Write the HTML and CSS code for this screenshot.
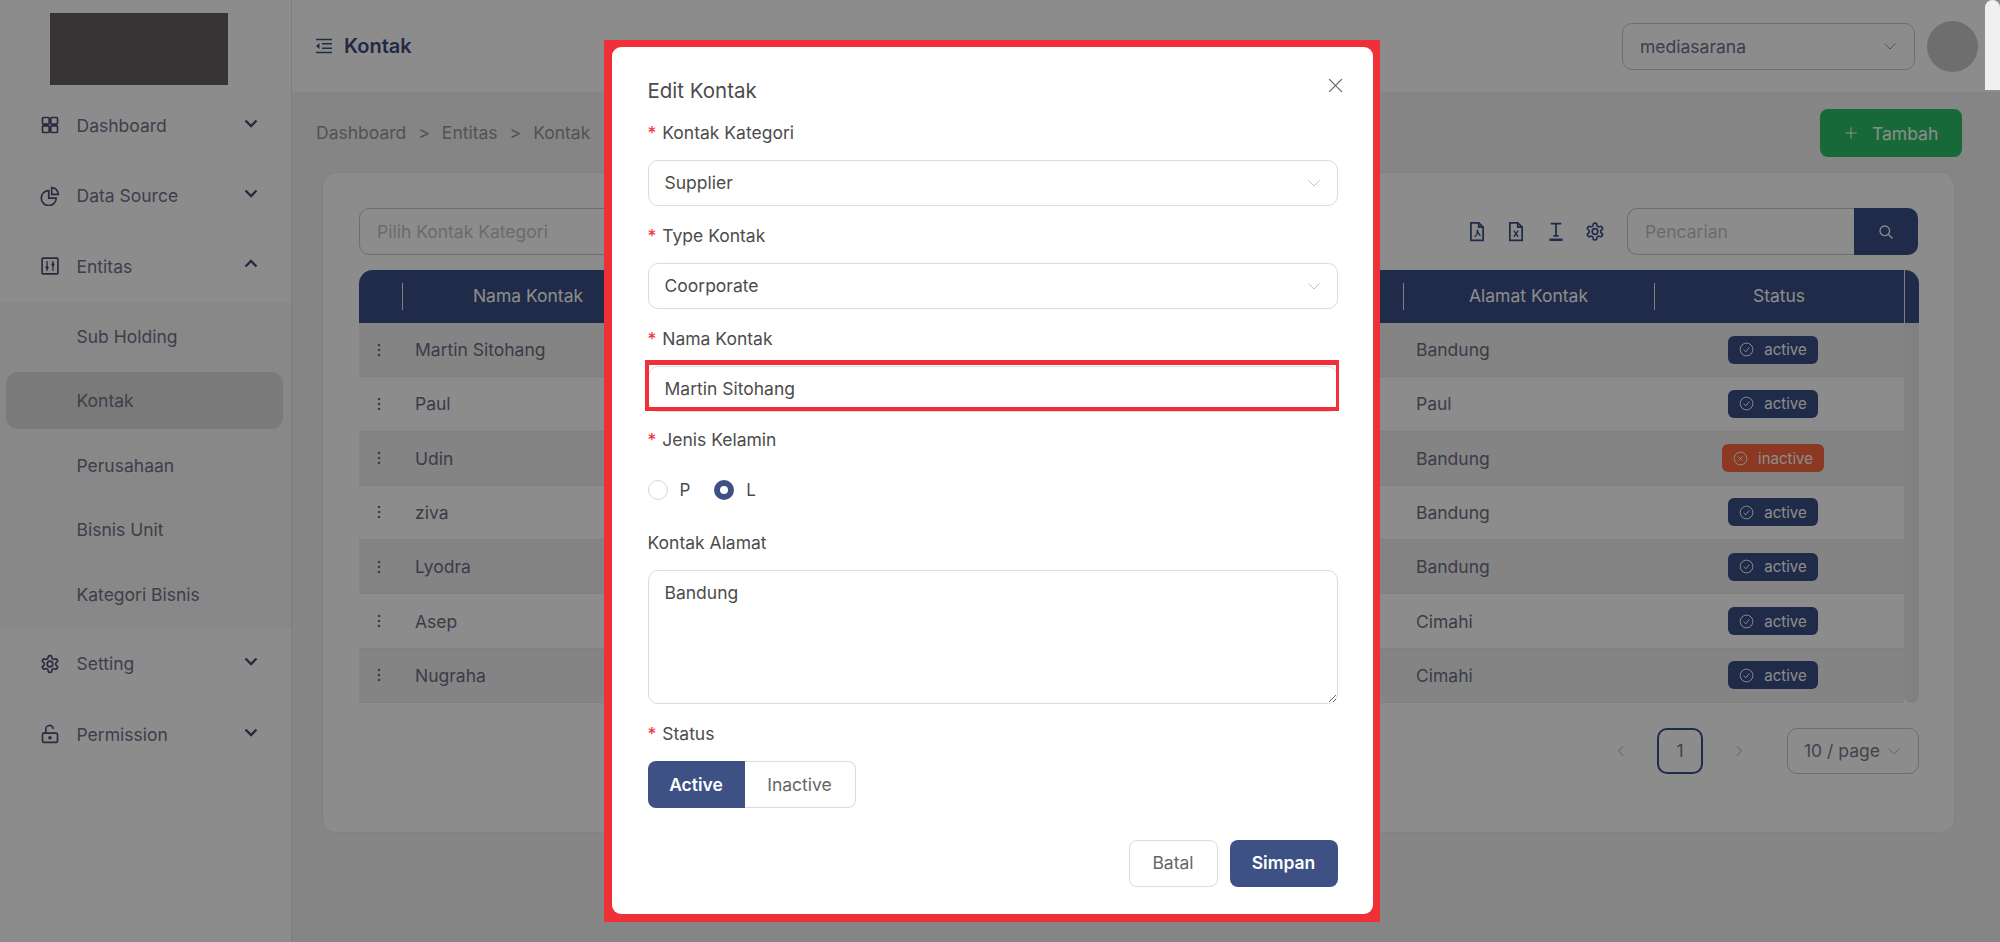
FILE: index.html
```html
<!doctype html>
<html>
<head>
<meta charset="utf-8">
<title>Kontak</title>
<link rel="stylesheet" href="styles.css">
</head>
<body>
<svg class="defs" width="0" height="0">
  <symbol id="i-gear" viewBox="0 0 24 24"><path d="M12.22 2h-.44a2 2 0 0 0-2 2v.18a2 2 0 0 1-1 1.73l-.43.25a2 2 0 0 1-2 0l-.15-.08a2 2 0 0 0-2.73.73l-.22.38a2 2 0 0 0 .73 2.73l.15.1a2 2 0 0 1 1 1.72v.51a2 2 0 0 1-1 1.74l-.15.09a2 2 0 0 0-.73 2.73l.22.38a2 2 0 0 0 2.73.73l.15-.08a2 2 0 0 1 2 0l.43.25a2 2 0 0 1 1 1.73V20a2 2 0 0 0 2 2h.44a2 2 0 0 0 2-2v-.18a2 2 0 0 1 1-1.73l.43-.25a2 2 0 0 1 2 0l.15.08a2 2 0 0 0 2.73-.73l.22-.39a2 2 0 0 0-.73-2.73l-.15-.08a2 2 0 0 1-1-1.74v-.5a2 2 0 0 1 1-1.74l.15-.09a2 2 0 0 0 .73-2.73l-.22-.38a2 2 0 0 0-2.73-.73l-.15.08a2 2 0 0 1-2 0l-.43-.25a2 2 0 0 1-1-1.73V4a2 2 0 0 0-2-2z"/><circle cx="12" cy="12" r="3.4"/></symbol>
  <symbol id="i-down" viewBox="0 0 16 16"><path d="M2.5 5.5 8 11l5.500-5.500"/></symbol>
  <symbol id="i-kebab" viewBox="0 0 4 16"><circle cx="2" cy="3" r="1.300"/><circle cx="2" cy="8" r="1.300"/><circle cx="2" cy="13" r="1.300"/></symbol>
  <symbol id="i-check" viewBox="0 0 16 16"><circle cx="8" cy="8" r="6.800"/><path d="M5 8.200 7.200 10.500 11 5.800"/></symbol>
  <symbol id="i-cross" viewBox="0 0 16 16"><circle cx="8" cy="8" r="6.800"/><path d="M5.800 5.800l4.400 4.400M10.200 5.800l-4.400 4.400"/></symbol>
</svg>

<div class="app">
  <aside class="sidebar">
    <div class="logo"></div>
    <nav class="menu">
      <a class="menu-item">
        <svg class="menu-icon" viewBox="0 0 24 24"><rect x="3" y="3" width="8" height="8" rx="1"/><rect x="13" y="3" width="8" height="8" rx="1"/><rect x="3" y="13" width="8" height="8" rx="1"/><rect x="13" y="13" width="8" height="8" rx="1"/></svg>
        <span>Dashboard</span>
        <svg class="menu-arrow"><use href="#i-down"/></svg>
      </a>
      <a class="menu-item">
        <svg class="menu-icon" viewBox="0 0 24 24"><path d="M10.500 5.500a9 9 0 1 0 9 9h-9z"/><path d="M14 2a8 8 0 0 1 8 8h-8z"/></svg>
        <span>Data Source</span>
        <svg class="menu-arrow"><use href="#i-down"/></svg>
      </a>
      <a class="menu-item">
        <svg class="menu-icon" viewBox="0 0 24 24"><rect x="2.500" y="2.500" width="19" height="19" rx="1"/><path class="thin" d="M8.500 6v12M15.500 6v12"/><path class="fill" d="M8.500 11l2.200 2.800-2.200 2.800-2.200-2.800zM15.500 7.500l2.200 2.800-2.200 2.800-2.200-2.800z"/></svg>
        <span>Entitas</span>
        <svg class="menu-arrow is-open"><use href="#i-down"/></svg>
      </a>
      <div class="submenu">
        <a class="sub-item">Sub Holding</a>
        <a class="sub-item is-active">Kontak</a>
        <a class="sub-item">Perusahaan</a>
        <a class="sub-item">Bisnis Unit</a>
        <a class="sub-item">Kategori Bisnis</a>
      </div>
      <a class="menu-item">
        <svg class="menu-icon"><use href="#i-gear"/></svg>
        <span>Setting</span>
        <svg class="menu-arrow"><use href="#i-down"/></svg>
      </a>
      <a class="menu-item">
        <svg class="menu-icon" viewBox="0 0 24 24"><rect x="3" y="11" width="18" height="11" rx="1.500"/><path d="M7 11V6.500a4.500 4.500 0 0 1 9-.5"/><circle cx="12" cy="16.500" r="1.200"/></svg>
        <span>Permission</span>
        <svg class="menu-arrow"><use href="#i-down"/></svg>
      </a>
    </nav>
  </aside>

  <main class="main">
    <header class="topbar">
      <svg class="fold-icon" viewBox="0 0 18 16"><path d="M1 1.500h16M7 5.800h10M7 10.200h10M1 14.500h16"/><path class="fill" d="M4.500 5v6L1 8z"/></svg>
      <h1 class="page-title">Kontak</h1>
      <div class="select org-select"><span>mediasarana</span><svg class="select-arrow"><use href="#i-down"/></svg></div>
      <div class="avatar"></div>
    </header>

    <div class="content">
      <div class="crumb-row">
        <div class="crumbs"><span>Dashboard</span><i>&gt;</i><span>Entitas</span><i>&gt;</i><span>Kontak</span></div>
        <button class="btn-add"><svg viewBox="0 0 16 16"><path d="M8 1.500v13M1.500 8h13"/></svg>Tambah</button>
      </div>

      <section class="card">
        <div class="toolbar">
          <div class="select filter-select"><span class="placeholder">Pilih Kontak Kategori</span></div>
          <div class="tool-icons">
            <svg viewBox="0 0 20 24"><path d="M3 2h9l5 5v15H3z"/><path d="M12 2v5h5"/><path class="thin" d="M7 18c2-1 4-4 3-8 1 3 2 5 4 7"/></svg>
            <svg viewBox="0 0 20 24"><path d="M3 2h9l5 5v15H3z"/><path d="M12 2v5h5"/><path class="thin" d="M7.500 11l5 7M12.500 11l-5 7"/></svg>
            <svg viewBox="0 0 20 24"><path d="M4 3h12M10 3v14M7 17h6"/><path class="thick" d="M2.500 21.500h15"/></svg>
            <svg><use href="#i-gear"/></svg>
          </div>
          <div class="search">
            <div class="search-input">Pencarian</div>
            <button class="search-btn"><svg viewBox="0 0 16 16"><circle cx="6.800" cy="6.800" r="4.800"/><path d="m10.500 10.500 4 4"/></svg></button>
          </div>
        </div>

        <div class="tbl">
          <div class="tbl-head">
            <div></div>
            <div class="th">Nama Kontak</div>
            <div class="th"></div>
            <div class="th">Alamat Kontak</div>
            <div class="th">Status</div>
            <div class="th th-end"></div>
          </div>
          <div class="tbl-wrap">
            <div class="tbl-rows">
              <div class="row"><svg class="kebab"><use href="#i-kebab"/></svg><div class="td">Martin Sitohang</div><div></div><div class="td">Bandung</div><div class="td-status"><span class="badge"><svg><use href="#i-check"/></svg>active</span></div></div>
              <div class="row"><svg class="kebab"><use href="#i-kebab"/></svg><div class="td">Paul</div><div></div><div class="td">Paul</div><div class="td-status"><span class="badge"><svg><use href="#i-check"/></svg>active</span></div></div>
              <div class="row"><svg class="kebab"><use href="#i-kebab"/></svg><div class="td">Udin</div><div></div><div class="td">Bandung</div><div class="td-status"><span class="badge badge-off"><svg><use href="#i-cross"/></svg>inactive</span></div></div>
              <div class="row"><svg class="kebab"><use href="#i-kebab"/></svg><div class="td">ziva</div><div></div><div class="td">Bandung</div><div class="td-status"><span class="badge"><svg><use href="#i-check"/></svg>active</span></div></div>
              <div class="row"><svg class="kebab"><use href="#i-kebab"/></svg><div class="td">Lyodra</div><div></div><div class="td">Bandung</div><div class="td-status"><span class="badge"><svg><use href="#i-check"/></svg>active</span></div></div>
              <div class="row"><svg class="kebab"><use href="#i-kebab"/></svg><div class="td">Asep</div><div></div><div class="td">Cimahi</div><div class="td-status"><span class="badge"><svg><use href="#i-check"/></svg>active</span></div></div>
              <div class="row"><svg class="kebab"><use href="#i-kebab"/></svg><div class="td">Nugraha</div><div></div><div class="td">Cimahi</div><div class="td-status"><span class="badge"><svg><use href="#i-check"/></svg>active</span></div></div>
            </div>
            <div class="tbl-scroll"></div>
          </div>
        </div>

        <div class="pager">
          <svg class="pager-arrow" viewBox="0 0 16 16"><path d="M10.500 2.500 5 8l5.500 5.500"/></svg>
          <div class="pager-num">1</div>
          <svg class="pager-arrow" viewBox="0 0 16 16"><path d="M5.500 2.500 11 8l-5.500 5.500"/></svg>
          <div class="select size-select"><span>10 / page</span><svg class="select-arrow"><use href="#i-down"/></svg></div>
        </div>
      </section>
    </div>
  </main>
</div>

<div class="overlay">
  <div class="page-thumb"></div>
  <div class="marked">
    <form class="modal">
      <svg class="modal-close" viewBox="0 0 16 16"><path d="M2 2l12 12M14 2 2 14"/></svg>
      <div class="modal-title">Edit Kontak</div>

      <div class="field">
        <div class="label req">Kontak Kategori</div>
        <div class="ctl"><span>Supplier</span><svg class="select-arrow"><use href="#i-down"/></svg></div>
      </div>
      <div class="field">
        <div class="label req">Type Kontak</div>
        <div class="ctl"><span>Coorporate</span><svg class="select-arrow"><use href="#i-down"/></svg></div>
      </div>
      <div class="field field-marked">
        <div class="label req">Nama Kontak</div>
        <div class="ctl ctl-marked"><span>Martin Sitohang</span></div>
      </div>
      <div class="field">
        <div class="label req">Jenis Kelamin</div>
        <div class="radios">
          <label class="radio"><span class="dot"></span>P</label>
          <label class="radio"><span class="dot is-on"></span>L</label>
        </div>
      </div>
      <div class="field">
        <div class="label">Kontak Alamat</div>
        <textarea class="area">Bandung</textarea>
      </div>
      <div class="field">
        <div class="label req">Status</div>
        <div class="segment">
          <div class="seg seg-on">Active</div>
          <div class="seg">Inactive</div>
        </div>
      </div>

      <div class="modal-foot">
        <button type="button" class="btn">Batal</button>
        <button type="button" class="btn btn-primary">Simpan</button>
      </div>
    </form>
  </div>
</div>
</body>
</html>
```

FILE: styles.css
```css
* {
  box-sizing: border-box;
}
html, body {
  margin: 0;
  height: 100%;
  overflow: hidden;
}
body {
  font-family: Inter, "Noto Sans", sans-serif;
  font-size: 17.5px;
  color: #6d6d83;
  background: #fff;
}
svg {
  fill: none;
  stroke: currentColor;
  stroke-width: 2;
  display: block;
}
.defs {
  position: absolute;
}

.app {
  display: flex;
  height: 942px;
}

/* sidebar */
.sidebar {
  width: 292px;
  flex: none;
  background: #fff;
  border-right: 1px solid #e6e6e6;
  padding-top: 13px;
}
.logo {
  width: 178px;
  height: 72px;
  margin-left: 50px;
  background: #635f5f;
}
.menu {
  margin-top: 5px;
}
.menu-item {
  display: flex;
  align-items: center;
  height: 70.5px;
  padding-left: 40px;
  color: #72728a;
}
.menu-icon {
  width: 20px;
  height: 20px;
  margin-right: 16.500px;
  color: #4e4e74;
}
.menu-icon .thin {
  stroke-width: 1.500;
}
.menu-icon .fill {
  fill: currentColor;
  stroke: none;
}
.menu-arrow {
  width: 16px;
  height: 16px;
  margin-left: auto;
  margin-right: 32px;
  margin-top: -5px;
  color: #4e4e74;
  stroke-width: 2.4;
}
.menu-arrow.is-open {
  transform: rotate(180deg);
}
.submenu {
  background: #f7f7f7;
  padding-top: 6px;
  height: 327px;
}
.sub-item {
  display: flex;
  align-items: center;
  height: 57px;
  margin: 0 8px 7.500px 6px;
  padding-left: 70.500px;
  color: #72728a;
  border-radius: 12px;
}
.sub-item.is-active {
  background: #dedede;
}

/* main */
.main {
  flex: 1;
  min-width: 0;
  background: #f2f2f2;
}
.topbar {
  display: flex;
  align-items: center;
  height: 92px;
  padding: 0 22px 0 23px;
  background: #fff;
}
.fold-icon {
  width: 18px;
  height: 16px;
  margin-right: 11px;
  color: #3b4f85;
  stroke-width: 1.6;
}
.fold-icon .fill {
  fill: currentColor;
  stroke: none;
}
.page-title {
  margin: 0;
  font-size: 20px;
  font-weight: 600;
  color: #3f4c80;
}
.select {
  display: flex;
  align-items: center;
  border: 1px solid #c9c9c9;
  border-radius: 10px;
  background: #fff;
}
.select-arrow {
  width: 16px;
  height: 16px;
  stroke-width: 1;
  color: #bdbdbd;
}
.org-select {
  width: 293px;
  height: 47px;
  margin-left: auto;
  padding: 0 16px 0 17px;
  justify-content: space-between;
  color: #6f7090;
  background: transparent;
}
.org-select .select-arrow {
  color: #9a9a9a;
}
.avatar {
  width: 51px;
  height: 51px;
  margin-left: 12px;
  border-radius: 50%;
  background: #c9c9c9;
}

.content {
  padding: 17px 38px 0 24px;
}
.crumb-row {
  display: flex;
  align-items: center;
  justify-content: space-between;
  height: 48px;
}
.crumbs {
  display: flex;
  gap: 12px;
  padding-bottom: 2px;
  color: #96969c;
}
.crumbs i {
  font-style: normal;
}
.btn-add {
  display: flex;
  align-items: center;
  gap: 14px;
  width: 142px;
  height: 48px;
  padding: 0 0 0 24px;
  border: 0;
  border-radius: 8px;
  font: inherit;
  color: #fff;
  background: #2ac164;
}
.btn-add svg {
  width: 14px;
  height: 14px;
  stroke-width: 1.2;
}
.card {
  height: 661px;
  margin: 15px 7px 0 6px;
  padding: 35px 36px 0 36px;
  background: #fff;
  border: 1px solid #ececec;
  border-radius: 14px;
}
.toolbar {
  display: flex;
  align-items: center;
  height: 47px;
}
.filter-select {
  width: 420px;
  height: 47px;
  padding-left: 17px;
}
.placeholder {
  color: #c4c4c4;
}
.tool-icons {
  display: flex;
  gap: 19.500px;
  margin-left: auto;
  margin-right: 22px;
  color: #3b4f85;
}
.tool-icons svg {
  width: 20px;
  height: 21px;
  stroke-width: 2;
}
.tool-icons .thin {
  stroke-width: 1.500;
}
.tool-icons .thick {
  stroke-width: 2.800;
}
.search {
  display: flex;
  width: 291px;
  height: 47px;
}
.search-input {
  flex: 1;
  display: flex;
  align-items: center;
  padding-left: 17px;
  color: #c4c4c4;
  border: 1px solid #c9c9c9;
  border-right: 0;
  border-radius: 10px 0 0 10px;
}
.search-btn {
  width: 64px;
  padding: 0;
  border: 0;
  border-radius: 0 10px 10px 0;
  color: #fff;
  background: #3b4f85;
  display: flex;
  align-items: center;
  justify-content: center;
}
.search-btn svg {
  width: 16px;
  height: 16px;
  stroke-width: 1.300;
}

/* table */
.tbl {
  margin-top: 15px;
  width: 1560px;
}
.tbl-head, .row {
  display: grid;
  grid-template-columns: 43px 252px 749px 251px 250px;
  align-items: center;
}
.tbl-head {
  grid-template-columns: 43px 252px 749px 251px 250px 15px;
  height: 53px;
  color: #fff;
  background: #3b4f85;
  border-radius: 14px 14px 0 0;
}
.th {
  height: 53px;
  line-height: 51px;
  text-align: center;
  background: linear-gradient(#e8e8e8, #e8e8e8) left center / 1px 27px no-repeat;
}
.th-end {
  background-size: 1px 53px;
}
.tbl-wrap {
  display: flex;
}
.tbl-rows {
  flex: 1;
}
.row {
  height: 54.290px;
  border-bottom: 1px solid #e9e9e9;
}
.row:nth-child(odd) {
  background: #f1f1f1;
}
.kebab {
  width: 4px;
  height: 16px;
  margin-left: 18px;
  fill: currentColor;
  stroke: none;
}
.td {
  padding-left: 13px;
}
.td-status {
  display: flex;
  justify-content: center;
  padding-right: 12px;
}
.badge {
  display: inline-flex;
  align-items: center;
  gap: 10px;
  height: 28px;
  padding: 0 11px;
  border-radius: 6px;
  font-size: 15px;
  color: #fff;
  background: #3b4f85;
}
.badge svg {
  width: 15px;
  height: 15px;
  stroke-width: 1;
}
.badge-off {
  background: #fd693e;
}
.tbl-scroll {
  width: 15px;
  background: #ececec;
  border-radius: 0 0 7px 7px;
}

/* pagination */
.pager {
  display: flex;
  align-items: center;
  justify-content: flex-end;
  width: 1560px;
  margin-top: 25px;
}
.pager-arrow {
  width: 14px;
  height: 14px;
  stroke-width: 1.100;
  color: #a6a6a6;
}
.pager-num {
  width: 46px;
  height: 46px;
  margin: 0 29px;
  display: flex;
  align-items: center;
  justify-content: center;
  border: 2px solid #3b4f85;
  border-radius: 10px;
  color: #7a7a8c;
}
.size-select {
  width: 132px;
  height: 46px;
  margin-left: 41px;
  padding: 0 16px;
  justify-content: space-between;
  color: #7a7a8c;
}

/* modal */
.overlay {
  position: fixed;
  inset: 0;
  display: flex;
  justify-content: center;
  align-items: flex-start;
  padding: 40px 17px 0 0;
  background: rgba(0, 0, 0, .45);
}
.page-thumb {
  position: absolute;
  top: 0;
  right: 0;
  width: 15px;
  height: 90px;
  background: #f0f0f0;
  border-radius: 8px 8px 0 0;
}
.marked {
  width: 776px;
  height: 882px;
  padding: 7px 7px 8px 8px;
  background: #ef3038;
}
.modal {
  position: relative;
  height: 100%;
  padding: 31px 35px 0 36px;
  background: #fff;
  border-radius: 9px;
  color: #4c4c4c;
}
.modal-close {
  position: absolute;
  top: 30px;
  right: 29px;
  width: 17px;
  height: 17px;
  color: #666;
  stroke-width: 1.200;
}
.modal-title {
  height: 26px;
  line-height: 26px;
  margin-bottom: 16px;
  font-size: 20.500px;
}
.field {
  margin-bottom: 17px;
}
.field-marked {
  margin-bottom: 15px;
}
.label {
  height: 26px;
  line-height: 26px;
  margin-bottom: 14px;
}
.label.req::before {
  content: "*";
  margin-right: 6px;
  color: #ef3038;
}
.ctl {
  display: flex;
  align-items: center;
  justify-content: space-between;
  height: 46px;
  padding: 0 15px 1px 16px;
  border: 1px solid #dcdcdc;
  border-radius: 10px;
}
.ctl-marked {
  position: relative;
  padding-bottom: 2px;
}
.ctl-marked::after {
  content: "";
  position: absolute;
  top: -7px;
  left: -4px;
  right: -2px;
  bottom: 0;
  border: 5px solid #ef3038;
  border-width: 5px 3px 4px 4px;
}
.radios {
  display: flex;
  gap: 24px;
  height: 46px;
}
.radio {
  display: flex;
  align-items: center;
  gap: 12px;
  font-size: 17px;
}
.dot {
  width: 20px;
  height: 20px;
  border: 1px solid #d6d6d6;
  border-radius: 50%;
}
.dot.is-on {
  border: 6.500px solid #3d5185;
}
.area {
  display: block;
  width: 100%;
  height: 134px;
  padding: 11px 16px;
  border: 1px solid #dcdcdc;
  border-radius: 10px;
  font: inherit;
  color: inherit;
  outline: none;
}
.segment {
  display: flex;
  width: 208px;
  height: 47px;
}
.seg {
  display: flex;
  align-items: center;
  justify-content: center;
  flex: 1;
  padding-bottom: 1px;
  border: 1px solid #dcdcdc;
  border-left: 0;
  border-radius: 0 8px 8px 0;
  color: #666;
}
.seg-on {
  flex: none;
  width: 97px;
  border: 0;
  border-radius: 8px 0 0 8px;
  font-weight: 600;
  color: #fff;
  background: #3d5185;
}
.modal-foot {
  display: flex;
  justify-content: flex-end;
  gap: 12px;
  margin-top: 32px;
}
.btn {
  width: 89px;
  height: 47px;
  padding: 0 0 2px;
  border: 1px solid #dcdcdc;
  border-radius: 8px;
  font: inherit;
  color: #666;
  background: #fff;
}
.btn-primary {
  width: 108px;
  border: 0;
  font-weight: 600;
  color: #fff;
  background: #3d5185;
}
```
